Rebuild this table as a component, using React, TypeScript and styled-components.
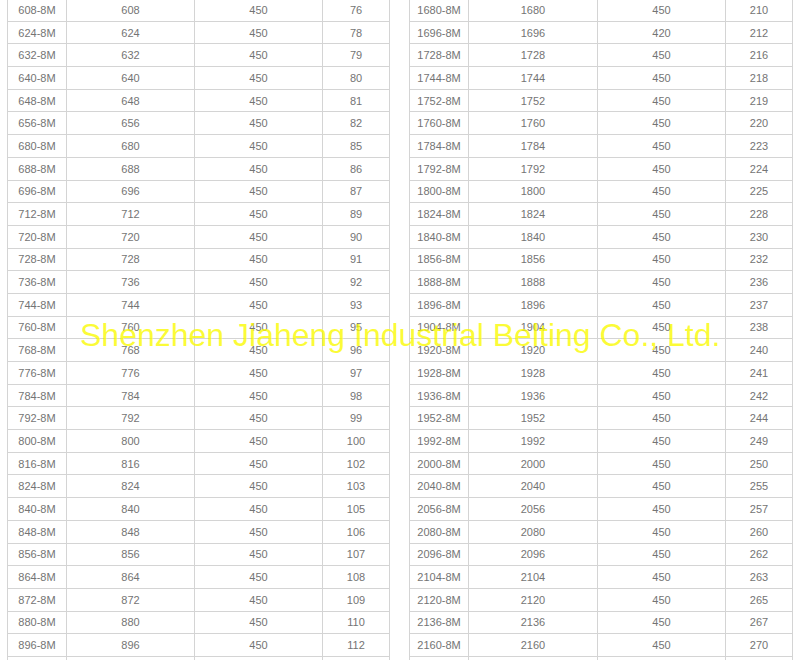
import React from 'react';
import styled, { createGlobalStyle } from 'styled-components';

const GlobalStyle = createGlobalStyle`
  html, body {
    margin: 0;
    padding: 0;
    background: #FFFFFF;
  }
  body {
    font-family: "Liberation Sans", Arial, sans-serif;
    overflow: hidden;
  }
`;

const Page = styled.div`
  position: relative;
  width: 800px;
  height: 660px;
  overflow: hidden;
`;

const Tables = styled.div`
  display: flex;
  gap: 19px;
  padding-left: 7px;
  margin-top: -2px;
`;

const SpecTable = styled.table<{ $width: number }>`
  width: ${p => p.$width}px;
  border-collapse: collapse;
  table-layout: fixed;
`;

const Row = styled.tr`
  height: 22.7px;
`;

const Cell = styled.td`
  border: 1px solid #D4D4D4;
  padding: 0;
  text-align: center;
  vertical-align: middle;
  font-size: 11px;
  color: #747474;
  line-height: 20px;
  white-space: nowrap;
`;

// watermark laid over the tables, as in the source picture
const Watermark = styled.div`
  position: absolute;
  left: 80px;
  top: 317px;
  font-family: "Liberation Sans", Arial, sans-serif;
  font-size: 32px;
  color: rgba(250, 250, 0, 0.78);
  white-space: nowrap;
  pointer-events: none;
`;

type Spec = [string, string, string, string];

const leftRows: Spec[] = [
  ['608', '608', '450', '76'],
  ['624', '624', '450', '78'],
  ['632', '632', '450', '79'],
  ['640', '640', '450', '80'],
  ['648', '648', '450', '81'],
  ['656', '656', '450', '82'],
  ['680', '680', '450', '85'],
  ['688', '688', '450', '86'],
  ['696', '696', '450', '87'],
  ['712', '712', '450', '89'],
  ['720', '720', '450', '90'],
  ['728', '728', '450', '91'],
  ['736', '736', '450', '92'],
  ['744', '744', '450', '93'],
  ['760', '760', '450', '95'],
  ['768', '768', '450', '96'],
  ['776', '776', '450', '97'],
  ['784', '784', '450', '98'],
  ['792', '792', '450', '99'],
  ['800', '800', '450', '100'],
  ['816', '816', '450', '102'],
  ['824', '824', '450', '103'],
  ['840', '840', '450', '105'],
  ['848', '848', '450', '106'],
  ['856', '856', '450', '107'],
  ['864', '864', '450', '108'],
  ['872', '872', '450', '109'],
  ['880', '880', '450', '110'],
  ['896', '896', '450', '112'],
];

const rightRows: Spec[] = [
  ['1680', '1680', '450', '210'],
  ['1696', '1696', '420', '212'],
  ['1728', '1728', '450', '216'],
  ['1744', '1744', '450', '218'],
  ['1752', '1752', '450', '219'],
  ['1760', '1760', '450', '220'],
  ['1784', '1784', '450', '223'],
  ['1792', '1792', '450', '224'],
  ['1800', '1800', '450', '225'],
  ['1824', '1824', '450', '228'],
  ['1840', '1840', '450', '230'],
  ['1856', '1856', '450', '232'],
  ['1888', '1888', '450', '236'],
  ['1896', '1896', '450', '237'],
  ['1904', '1904', '450', '238'],
  ['1920', '1920', '450', '240'],
  ['1928', '1928', '450', '241'],
  ['1936', '1936', '450', '242'],
  ['1952', '1952', '450', '244'],
  ['1992', '1992', '450', '249'],
  ['2000', '2000', '450', '250'],
  ['2040', '2040', '450', '255'],
  ['2056', '2056', '450', '257'],
  ['2080', '2080', '450', '260'],
  ['2096', '2096', '450', '262'],
  ['2104', '2104', '450', '263'],
  ['2120', '2120', '450', '265'],
  ['2136', '2136', '450', '267'],
  ['2160', '2160', '450', '270'],
];

const BeltTable: React.FC<{ rows: Spec[]; cols: number[] }> = ({ rows, cols }) => (
  <SpecTable $width={cols.reduce((a, b) => a + b, 0)}>
    <colgroup>
      {cols.map((w, i) => (
        <col key={i} style={{ width: w }} />
      ))}
    </colgroup>
    <tbody>
      {rows.map(([model, length, width, teeth]) => (
        <Row key={model}>
          <Cell>{model}-8M</Cell>
          <Cell>{length}</Cell>
          <Cell>{width}</Cell>
          <Cell>{teeth}</Cell>
        </Row>
      ))}
      {/* next row is cut off by the bottom edge */}
      <Row>
        <Cell />
        <Cell />
        <Cell />
        <Cell />
      </Row>
    </tbody>
  </SpecTable>
);

const App: React.FC = () => (
  <Page>
    <GlobalStyle />
    <Tables>
      <BeltTable rows={leftRows} cols={[59, 128, 128, 67]} />
      <BeltTable rows={rightRows} cols={[59, 129, 128, 67]} />
    </Tables>
    <Watermark>Shenzhen Jiaheng Industrial Belting Co., Ltd.</Watermark>
  </Page>
);

export default App;
